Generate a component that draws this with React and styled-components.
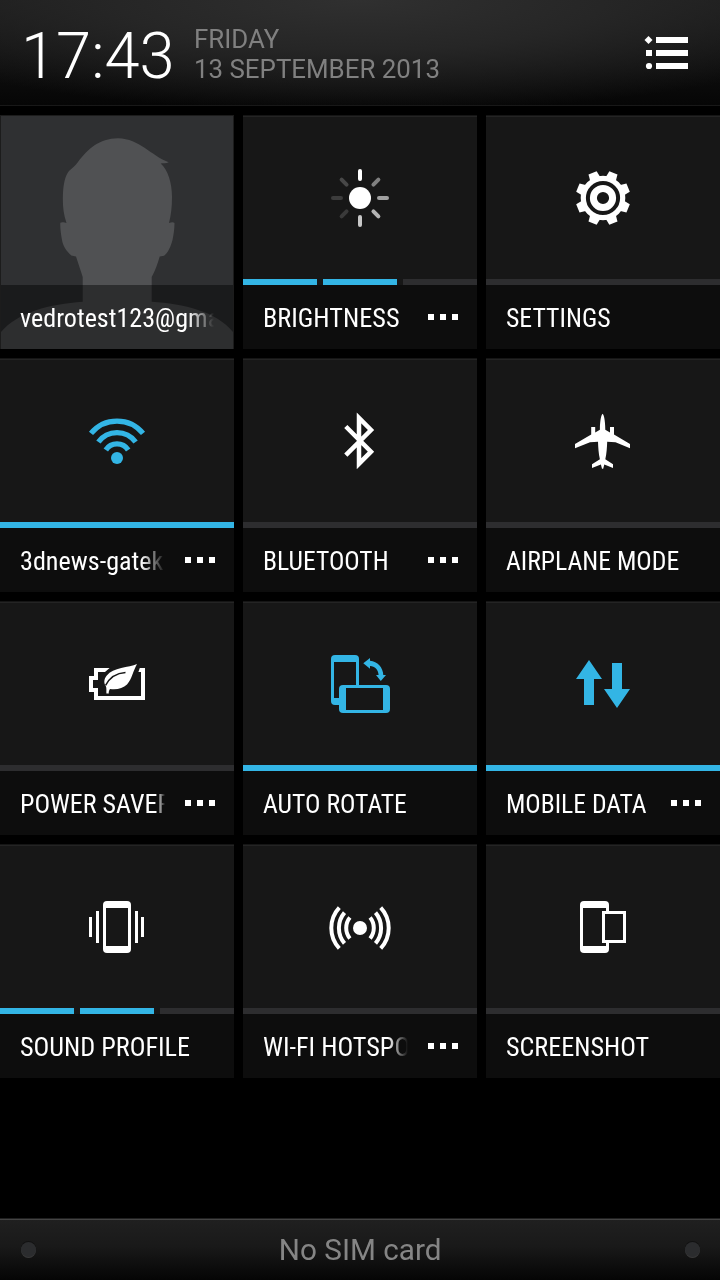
import React from "react";
import styled, { createGlobalStyle } from "styled-components";

const GlobalStyle = createGlobalStyle`
  * {
    box-sizing: border-box;
  }
  body {
    margin: 0;
    background-color: #000;
  }
`;

const Screen = styled.div`
  width: 720px;
  height: 1280px;
  display: flex;
  flex-direction: column;
  overflow: hidden;
  color: #fff;
  background-color: #000;
  font-family: Roboto, sans-serif;
`;

const Header = styled.header`
  height: 106px;
  display: flex;
  align-items: flex-start;
  padding: 0 32px 0 21px;
  border-bottom: 1px solid #181818;
  background: radial-gradient(ellipse 540px 112px at 50% 0, #303030 0%, #262626 45%, rgba(20, 20, 20, 0) 100%),
    linear-gradient(#1b1b1b, #060606);
`;

const Clock = styled.div`
  width: 173px;
  margin-top: 18px;
  font-size: 65px;
  font-weight: 300;
  line-height: 76px;
  white-space: nowrap;
`;

const ClockText = styled.span`
  display: inline-block;
  transform: scaleX(${(p) => p.$stretch});
  transform-origin: 0 50%;
`;

const DateBox = styled.div`
  flex: 1;
  margin-top: 24px;
  color: #808080;
  font-size: 26px;
  line-height: 30px;
  white-space: nowrap;
`;

const DateLine = styled.div`
  transform: scaleX(${(p) => p.$stretch});
  transform-origin: 0 50%;
`;

const ListIcon = styled.svg`
  width: 44px;
  height: 34px;
  margin-top: 36px;
  fill: #fff;
`;

const Grid = styled.main`
  display: grid;
  grid-template-columns: repeat(3, 234px);
  grid-auto-rows: 234px;
  gap: 9px;
  padding-top: 9px;
`;

const Tile = styled.section`
  display: flex;
  flex-direction: column;
  background-color: #171717;
`;

const TileIcon = styled.div`
  height: 164px;
  display: flex;
  align-items: center;
  justify-content: center;
  padding-top: 2px;
  box-shadow: inset 0 1px #151515, inset 0 2px #242424;
  color: ${(p) => (p.$on ? "#33b5e5" : "#fff")};
`;

const Icon = styled.svg`
  width: 64px;
  height: 64px;
  fill: currentColor;
`;

const Level = styled.div`
  height: 6px;
  display: flex;
  gap: 6px;
`;

const LevelPart = styled.span`
  flex: 1;
  background-color: ${(p) => (p.$on ? "#33b5e5" : "#2d2d2f")};
`;

const TileLabel = styled.div`
  height: 64px;
  display: flex;
  align-items: center;
  justify-content: space-between;
  padding: 2px 19px 0 20px;
  background-color: ${(p) => (p.$clear ? "rgba(0, 0, 0, 0.43)" : "#0d0d0d")};
`;

const LabelClip = styled.div`
  width: ${(p) => (p.$more ? "145px" : "194px")};
  overflow: hidden;
  white-space: nowrap;
  font-size: 26px;
  line-height: 34px;
  mask-image: ${(p) =>
    p.$fade ? `linear-gradient(90deg, #000 calc(100% - ${p.$fade}px), transparent)` : "none"};
`;

const LabelText = styled.span`
  display: inline-block;
  font-family: "Roboto Condensed", Roboto, sans-serif;
  transform: scaleX(${(p) => p.$stretch || 1});
  transform-origin: 0 50%;
`;

const More = styled.div`
  display: flex;
  gap: 6px;
  margin-top: -2px;
`;

const MoreDot = styled.span`
  width: 6px;
  height: 6px;
  background-color: #fff;
`;

const Profile = styled.section`
  display: flex;
  flex-direction: column;
  justify-content: flex-end;
  position: relative;
  border: 1px solid #1c1c1c;
  border-bottom: 0;
  background-color: #2f3032;
`;

const Avatar = styled.svg`
  position: absolute;
  top: -1px;
  left: -1px;
  width: 234px;
  height: 234px;
`;

const ProfileLabel = styled(TileLabel)`
  position: relative;
  padding-left: 19px;
`;

const Footer = styled.footer`
  height: 62px;
  margin-top: auto;
  display: flex;
  align-items: center;
  justify-content: space-between;
  padding: 0 20px 1px 21px;
  border-top: 1px solid #202020;
  box-shadow: inset 0 1px #444;
  color: #858585;
  font-size: 30px;
  background: linear-gradient(#202020 0%, #191919 45%, #050505 100%);
`;

const Rivet = styled.span`
  width: 15px;
  height: 15px;
  border-radius: 50%;
  background-color: #2b2c2e;
  box-shadow: 0 1px #3a3a3a, 0 -1px #111;
`;

const Carrier = styled.span`
  transform: scaleX(${(p) => p.$stretch});
`;

const gearAngles = [22.5, 67.5, 112.5, 157.5, 202.5, 247.5, 292.5, 337.5];

const rays = ["#fff", "#808080", "#a0a0a0", "#b4b4b4", "#c8c8c8", "#3a3a3a", "#3c3c3c", "#484848"];

const BrightnessIcon = () => (
  <Icon viewBox="0 0 64 64">
    <circle cx="32" cy="32" r="11" />
    {rays.map((color, i) => (
      <path
        key={i}
        d={i % 2 ? "M32 13V6" : "M32 13V5"}
        stroke={color}
        strokeWidth="4"
        strokeLinecap="round"
        transform={`rotate(${i * 45} 32 32)`}
      />
    ))}
  </Icon>
);

const SettingsIcon = () => (
  <Icon viewBox="0 0 64 64">
    {gearAngles.map((angle) => (
      <path key={angle} d="M26.4 13L27.6 4.8H36.4L37.6 13Z" transform={`rotate(${angle} 32 32)`} />
    ))}
    <circle cx="32" cy="32" r="19.7" fill="none" stroke="currentColor" strokeWidth="5.2" />
    <circle cx="32" cy="32" r="9.6" fill="none" stroke="currentColor" strokeWidth="7" />
  </Icon>
);

const WifiIcon = () => (
  <Icon viewBox="0 0 64 64">
    <circle cx="32" cy="49" r="6" />
    <g fill="none" stroke="currentColor" strokeWidth="5.3">
      <path d="M6 24.4A33.6 33.6 0 0 1 58 24.4" />
      <path d="M13.4 33A23 23 0 0 1 50.6 33" />
      <path d="M20.8 41A13.4 13.4 0 0 1 43.2 41" />
    </g>
  </Icon>
);

const BluetoothIcon = () => (
  <Icon viewBox="0 0 64 64">
    <path
      d="M17.8 17.5L43 42.7L31 54.7V9L43 21L17.8 46.2"
      fill="none"
      stroke="currentColor"
      strokeWidth="4.5"
      strokeMiterlimit="10"
    />
  </Icon>
);

const AirplaneIcon = () => (
  <Icon viewBox="0 0 64 64">
    <path d="M31.6 4.7C32.6 5.4 34.3 10 34.3 20.8L39 23.6V18H43V25.5L59 35V39.3L44.5 33.2L36.2 32.7C36 38 35.6 45 34.3 50.3L42 55.3V59L33.3 55.4L32.2 59.8H31L29.9 55.4L21 59V55.3L28.9 50.3C27.6 45 27.2 38 27 32.7L19 33.2L4 39.3V35L20.2 25.5V18H24.2V23.6L28.9 20.8C28.9 10 30.6 5.4 31.6 4.7Z" />
  </Icon>
);

const PowerIcon = () => (
  <Icon viewBox="0 0 64 64">
    <path d="M24.6 16H9V24H4V40H9V48H60V16H54.8L53.4 20H56V44H13V36H8V28H13V20H20Z" />
    <path d="M52 12C44 15.6 28 15.4 21.8 23.4C18.4 27.6 19 31.5 20.8 34C21.8 36.5 21.2 39 21.4 41.4H23.8C23.6 39.6 24 38.4 25 36.9C31.5 38 38 36.4 42 32.4C47 27 48 19 52 12Z" />
    <path d="M40.5 20.6C31.5 21.2 24.5 26 20.6 33.4" fill="none" stroke="#171717" strokeWidth="1.5" />
  </Icon>
);

const RotateIcon = () => (
  <Icon viewBox="0 0 64 64">
    <rect x="3" y="3" width="28" height="50" rx="4" />
    <rect x="6" y="10" width="22" height="36" fill="#171717" />
    <rect x="11" y="33" width="51" height="28" rx="4" />
    <rect x="18" y="36" width="37" height="22" fill="#171717" />
    <path d="M35.3 11.3L42 6V8.7C49.5 9.2 55 15.5 55.3 22.9H58L52.8 28.9L48 22.9H50.6C50.2 17.6 46.8 14.2 42 14V16.7Z" />
  </Icon>
);

const DataIcon = () => (
  <Icon viewBox="0 0 64 64">
    <path d="M18 8L31 27H23V53H13V27H5Z" />
    <path d="M46 56L33 37H41V11H51V37H59Z" />
  </Icon>
);

const SoundIcon = () => (
  <Icon viewBox="0 0 64 64">
    <rect x="18" y="6" width="28" height="52" rx="4" />
    <rect x="21" y="13" width="22" height="38" fill="#171717" />
    <path d="M4 22H7V42H4ZM11 16H14V48H11ZM50 16H53V48H50ZM56 22H59V42H56Z" />
  </Icon>
);

const HotspotIcon = () => (
  <Icon viewBox="0 0 64 64">
    <circle cx="32" cy="33" r="7" />
    <g fill="none" stroke="currentColor" strokeWidth="4">
      <path d="M11.3 12.6A30 30 0 0 0 11.3 53.4M16.5 17.6A24 24 0 0 0 16.5 48.4M21.9 22.6A16.5 16.5 0 0 0 21.9 43.4" />
      <path d="M52.7 12.6A30 30 0 0 1 52.7 53.4M47.5 17.6A24 24 0 0 1 47.5 48.4M42.1 22.6A16.5 16.5 0 0 1 42.1 43.4" />
    </g>
  </Icon>
);

const ScreenshotIcon = () => (
  <Icon viewBox="0 0 64 64">
    <rect x="9" y="6" width="29" height="52" rx="4" />
    <rect x="12" y="13" width="23" height="38" fill="#171717" />
    <rect x="31" y="16" width="24" height="32" />
    <rect x="34" y="19" width="18" height="26" fill="#171717" />
  </Icon>
);

const tiles = [
  { label: "BRIGHTNESS", icon: BrightnessIcon, levels: [1, 1, 0], more: true, stretch: 1.01 },
  { label: "SETTINGS", icon: SettingsIcon, levels: [0], stretch: 0.992 },
  { label: "3dnews-gatek", icon: WifiIcon, levels: [1], on: true, more: true, fade: 24, stretch: 1.005 },
  { label: "BLUETOOTH", icon: BluetoothIcon, levels: [0], more: true, stretch: 0.986 },
  { label: "AIRPLANE MODE", icon: AirplaneIcon, levels: [0], stretch: 0.988 },
  { label: "POWER SAVER", icon: PowerIcon, levels: [0], more: true, fade: 8 },
  { label: "AUTO ROTATE", icon: RotateIcon, levels: [1], on: true, stretch: 0.988 },
  { label: "MOBILE DATA", icon: DataIcon, levels: [1], on: true, more: true, stretch: 0.985 },
  { label: "SOUND PROFILE", icon: SoundIcon, levels: [1, 1, 0], stretch: 1.008 },
  { label: "WI-FI HOTSPO", icon: HotspotIcon, levels: [0], more: true, fade: 20, stretch: 1.008 },
  { label: "SCREENSHOT", icon: ScreenshotIcon, levels: [0], stretch: 1.005 },
];

const SettingTile = ({ item }) => {
  const TileGlyph = item.icon;
  return (
    <Tile>
      <TileIcon $on={item.on}>
        <TileGlyph />
      </TileIcon>
      <Level>
        {item.levels.map((on, i) => (
          <LevelPart key={i} $on={on} />
        ))}
      </Level>
      <TileLabel>
        <LabelClip $more={item.more} $fade={item.fade}>
          <LabelText $stretch={item.stretch}>{item.label}</LabelText>
        </LabelClip>
        {item.more && (
          <More>
            <MoreDot />
            <MoreDot />
            <MoreDot />
          </More>
        )}
      </TileLabel>
    </Tile>
  );
};

const App = () => {
  return (
    <Screen>
      <GlobalStyle />
      <Header>
        <Clock>
          <ClockText $stretch={0.973}>17:43</ClockText>
        </Clock>
        <DateBox>
          <DateLine $stretch={0.995}>FRIDAY</DateLine>
          <DateLine $stretch={0.995}>13 SEPTEMBER 2013</DateLine>
        </DateBox>
        <ListIcon viewBox="0 0 44 34">
          <path d="M4.5 0L8.5 4L4.5 8L0.5 4ZM2 14H8V20H2Z" />
          <circle cx="5" cy="30" r="3.1" />
          <path d="M12 1H44V7H12ZM12 14H44V20H12ZM12 27H44V33H12Z" />
        </ListIcon>
      </Header>
      <Grid>
        <Profile>
          <Avatar viewBox="0 0 234 234">
            <path
              fill="#505153"
              d="M1 234V217C18 197 50 189 82.7 186.7V162C81 156 78 148 76 141.5C74 141 73 141 71.7 140.7C66 136 63 131 62 125C61 119 60 113 60.3 107.7C62 106.5 65 107.5 66.5 108C63 98 62.5 88 63 78C63.5 69 65 61 69 56C72 53 75 51 78 47C88 34 99 23.5 118 23.3C140 24 150 40 168.7 47.3C166 48.6 163 48.3 160.7 48.5C168 55 172 68 172 82C172 92 171 100 169 108C171 107.5 173 106.5 174.5 108C174.5 114 173.5 120 172.5 125C171 131 168 138 164 140.7L159.7 141.5C158 148 155 156 151.7 162V186.7C184 189 216 196 233 217V234Z"
            />
          </Avatar>
          <ProfileLabel $clear>
            <LabelClip $fade={26}>
              <LabelText $stretch={1.003}>vedrotest123@gma</LabelText>
            </LabelClip>
          </ProfileLabel>
        </Profile>
        {tiles.map((item) => (
          <SettingTile key={item.label} item={item} />
        ))}
      </Grid>
      <Footer>
        <Rivet />
        <Carrier $stretch={0.99}>No SIM card</Carrier>
        <Rivet />
      </Footer>
    </Screen>
  );
};

export default App;
